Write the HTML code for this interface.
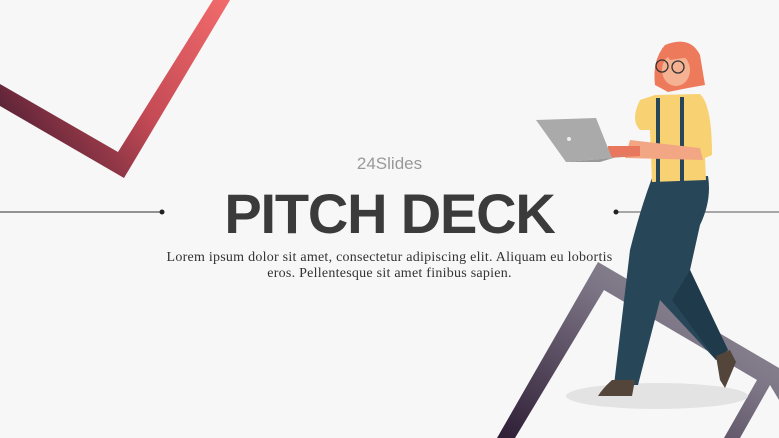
<!DOCTYPE html>
<html><head><meta charset="utf-8"><style>
html,body{margin:0;padding:0}
body{width:779px;height:438px;overflow:hidden;background:#f7f7f7;position:relative;font-family:"Liberation Sans",sans-serif}
.t{position:absolute;left:0;width:779px;text-align:center}
</style></head><body>
<svg width="779" height="438" style="position:absolute;left:0;top:0">
<defs>
<linearGradient id="r" x1="0" y1="0.6" x2="1" y2="0"><stop offset="0" stop-color="#5e2438"/><stop offset="0.45" stop-color="#c44a55"/><stop offset="1" stop-color="#f26b6b"/></linearGradient>
<linearGradient id="p" x1="0" y1="1" x2="1" y2="0"><stop offset="0" stop-color="#2e1d35"/><stop offset="0.6" stop-color="#7c7585"/><stop offset="1" stop-color="#9a96a0"/></linearGradient>
</defs>
<polygon points="0,84 118,152 213,0 230,0 124,178 0,106" fill="url(#r)"/>
<polygon points="497,438 598,262 779,368 779,400 770,385 740,438 724,438 757,380 604,290 515,438" fill="url(#p)"/>
<line x1="0" y1="212" x2="162" y2="212" stroke="#555" stroke-width="1.2"/>
<circle cx="162" cy="212" r="2.5" fill="#222"/>
<line x1="615" y1="212" x2="779" y2="212" stroke="#777" stroke-width="1.2"/>
<circle cx="616" cy="212" r="2.5" fill="#222"/>
<ellipse cx="657" cy="396" rx="91" ry="13" fill="#e4e3e3"/>
<path d="M652,178 L708,176 Q712,200 700,225 L690,270 L728,350 L716,360 L660,300 L638,385 L614,385 L630,250 Q640,210 652,178Z" fill="#274759"/>
<path d="M690,270 L728,350 L716,360 L672,300Z" fill="#1f3a4a"/>
<path d="M612,380 L635,380 L632,396 L598,396 Q603,388 612,380Z" fill="#54453a"/>
<path d="M716,356 L730,350 L736,362 L725,388 L720,380Z" fill="#54453a"/>
<path d="M655,95 L700,94 Q712,105 712,155 L705,158 L706,180 L652,182 L650,130 L640,130 Q630,120 640,100Z" fill="#f8d272"/>
<rect x="656" y="98" width="4" height="86" fill="#274759"/>
<rect x="680" y="97" width="4" height="86" fill="#274759"/>
<path d="M630,140 L700,148 L703,160 L625,158Z" fill="#f2a684"/>
<path d="M608,146 L640,146 L640,156 L608,158Z" fill="#e8775e"/>
<polygon points="536,120 596,118 612,158 566,162" fill="#aaaaaa"/>
<polygon points="566,162 612,158 640,150 600,162" fill="#999"/>
<circle cx="569" cy="139" r="2" fill="#eee"/>
<path d="M665,45 Q690,35 700,55 L705,85 L688,88 L668,92 L655,85 Q652,60 665,45Z" fill="#ee7a5c"/>
<ellipse cx="676" cy="70" rx="14" ry="16" fill="#f5b293"/>
<path d="M662,48 Q685,40 698,56 L670,60Z" fill="#ee7a5c"/>
<circle cx="662" cy="66" r="6" fill="none" stroke="#333" stroke-width="1.3"/>
<circle cx="678" cy="67" r="6" fill="none" stroke="#333" stroke-width="1.3"/>
</svg>
<div class="t" style="top:154px;font-size:17px;color:#999">24Slides</div>
<div class="t" style="top:182px;font-size:56px;font-weight:bold;color:#3b3b3b;letter-spacing:-1.2px;line-height:64px">PITCH DECK</div>
<div class="t" style="top:250px;font-family:'Liberation Serif',serif;font-size:14px;letter-spacing:0.25px;color:#333;line-height:15.5px">Lorem ipsum dolor sit amet, consectetur adipiscing elit. Aliquam eu lobortis<br>eros. Pellentesque sit amet finibus sapien.</div>
</body></html>
